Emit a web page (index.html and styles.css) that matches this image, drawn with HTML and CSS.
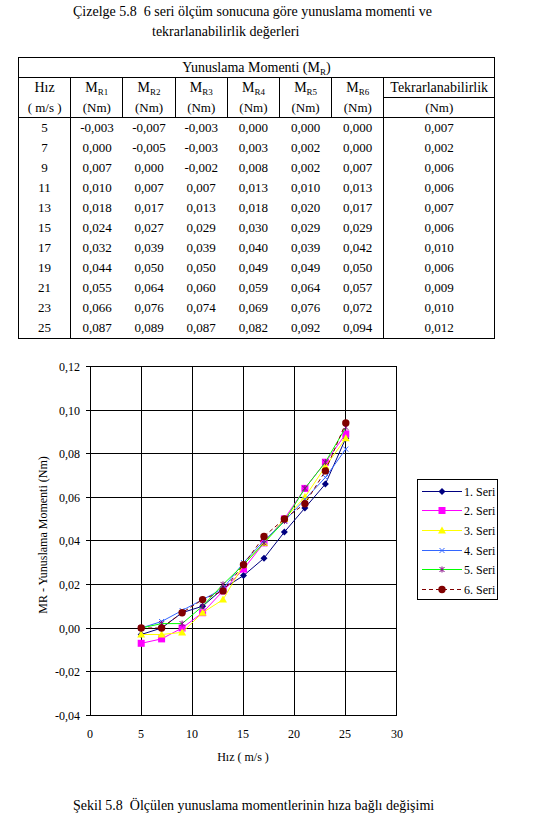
FILE: index.html
```html
<!DOCTYPE html>
<html lang="tr">
<head>
<meta charset="utf-8">
<title>Çizelge 5.8</title>
<link rel="stylesheet" href="styles.css">
</head>
<body>
<div class="title">
  <div class="t1">Çizelge 5.8&nbsp; 6 seri ölçüm sonucuna göre yunuslama momenti ve</div>
  <div class="t2">tekrarlanabilirlik değerleri</div>
</div>

<table class="data">
  <colgroup>
    <col class="c-hiz"><col class="c-m"><col class="c-m"><col class="c-m"><col class="c-m"><col class="c-m"><col class="c-m"><col class="c-t">
  </colgroup>
  <thead>
    <tr class="h1"><th colspan="8">Yunuslama Momenti (M<sub>R</sub>)</th></tr>
    <tr class="h2">
      <th>Hız</th><th>M<sub>R1</sub></th><th>M<sub>R2</sub></th><th>M<sub>R3</sub></th><th>M<sub>R4</sub></th><th>M<sub>R5</sub></th><th>M<sub>R6</sub></th><th class="tk">Tekrarlanabilirlik</th>
    </tr>
    <tr class="h3">
      <th>( m/s )</th><th>(Nm)</th><th>(Nm)</th><th>(Nm)</th><th>(Nm)</th><th>(Nm)</th><th>(Nm)</th><th>(Nm)</th>
    </tr>
  </thead>
  <tbody>
    <tr><td class="sp">5</td><td>-0,003</td><td>-0,007</td><td>-0,003</td><td>0,000</td><td>0,000</td><td class="r6">0,000</td><td>0,007</td></tr>
    <tr><td class="sp">7</td><td>0,000</td><td>-0,005</td><td>-0,003</td><td>0,003</td><td>0,002</td><td class="r6">0,000</td><td>0,002</td></tr>
    <tr><td class="sp">9</td><td>0,007</td><td>0,000</td><td>-0,002</td><td>0,008</td><td>0,002</td><td class="r6">0,007</td><td>0,006</td></tr>
    <tr><td class="sp">11</td><td>0,010</td><td>0,007</td><td>0,007</td><td>0,013</td><td>0,010</td><td class="r6">0,013</td><td>0,006</td></tr>
    <tr><td class="sp">13</td><td>0,018</td><td>0,017</td><td>0,013</td><td>0,018</td><td>0,020</td><td class="r6">0,017</td><td>0,007</td></tr>
    <tr><td class="sp">15</td><td>0,024</td><td>0,027</td><td>0,029</td><td>0,030</td><td>0,029</td><td class="r6">0,029</td><td>0,006</td></tr>
    <tr><td class="sp">17</td><td>0,032</td><td>0,039</td><td>0,039</td><td>0,040</td><td>0,039</td><td class="r6">0,042</td><td>0,010</td></tr>
    <tr><td class="sp">19</td><td>0,044</td><td>0,050</td><td>0,050</td><td>0,049</td><td>0,049</td><td class="r6">0,050</td><td>0,006</td></tr>
    <tr><td class="sp">21</td><td>0,055</td><td>0,064</td><td>0,060</td><td>0,059</td><td>0,064</td><td class="r6">0,057</td><td>0,009</td></tr>
    <tr><td class="sp">23</td><td>0,066</td><td>0,076</td><td>0,074</td><td>0,069</td><td>0,076</td><td class="r6">0,072</td><td>0,010</td></tr>
    <tr><td class="sp">25</td><td>0,087</td><td>0,089</td><td>0,087</td><td>0,082</td><td>0,092</td><td class="r6">0,094</td><td>0,012</td></tr>
  </tbody>
</table>

<svg class="chart" width="540" height="450" viewBox="0 340 540 450" xmlns="http://www.w3.org/2000/svg">
  <defs>
    <marker id="mk1" viewBox="-6 -6 12 12" markerWidth="12" markerHeight="12" refX="0" refY="0" markerUnits="userSpaceOnUse">
      <path d="M0,-3.5 L3.5,0 L0,3.5 L-3.5,0 Z" class="f1"/>
    </marker>
    <marker id="mk2" viewBox="-6 -6 12 12" markerWidth="12" markerHeight="12" refX="0" refY="0" markerUnits="userSpaceOnUse">
      <rect x="-3.5" y="-3.5" width="7" height="7" class="f2"/>
    </marker>
    <marker id="mk3" viewBox="-6 -6 12 12" markerWidth="12" markerHeight="12" refX="0" refY="0" markerUnits="userSpaceOnUse">
      <path d="M0,-4 L4,3 L-4,3 Z" class="f3"/>
    </marker>
    <marker id="mk4" viewBox="-6 -6 12 12" markerWidth="12" markerHeight="12" refX="0" refY="0" markerUnits="userSpaceOnUse">
      <path d="M-2.5,-2.5 L2.5,2.5 M-2.5,2.5 L2.5,-2.5" class="s4m"/>
    </marker>
    <marker id="mk5" viewBox="-6 -6 12 12" markerWidth="12" markerHeight="12" refX="0" refY="0" markerUnits="userSpaceOnUse">
      <path d="M-2.5,-2.5 L2.5,2.5 M-2.5,2.5 L2.5,-2.5 M0,-3 L0,3" class="s5m"/>
    </marker>
    <marker id="mk6" viewBox="-6 -6 12 12" markerWidth="12" markerHeight="12" refX="0" refY="0" markerUnits="userSpaceOnUse">
      <circle cx="0" cy="0" r="3.7" class="f6"/>
    </marker>
  </defs>

  <g class="grid">
    <line x1="86" y1="366.5" x2="397" y2="366.5"/>
    <line x1="86" y1="410.5" x2="397" y2="410.5"/>
    <line x1="86" y1="453.5" x2="397" y2="453.5"/>
    <line x1="86" y1="497.5" x2="397" y2="497.5"/>
    <line x1="86" y1="540.5" x2="397" y2="540.5"/>
    <line x1="86" y1="584.5" x2="397" y2="584.5"/>
    <line x1="86" y1="628.5" x2="397" y2="628.5"/>
    <line x1="86" y1="671.5" x2="397" y2="671.5"/>
    <line x1="86" y1="715.5" x2="397" y2="715.5"/>
    <line x1="90.5" y1="366" x2="90.5" y2="716"/>
    <line x1="141.5" y1="366" x2="141.5" y2="716"/>
    <line x1="192.5" y1="366" x2="192.5" y2="716"/>
    <line x1="243.5" y1="366" x2="243.5" y2="716"/>
    <line x1="294.5" y1="366" x2="294.5" y2="716"/>
    <line x1="345.5" y1="366" x2="345.5" y2="716"/>
    <line x1="396.5" y1="366" x2="396.5" y2="716"/>
  </g>

  <g class="lbl ylbl">
    <text x="80" y="371">0,12</text>
    <text x="80" y="415">0,10</text>
    <text x="80" y="458">0,08</text>
    <text x="80" y="502">0,06</text>
    <text x="80" y="545">0,04</text>
    <text x="80" y="589">0,02</text>
    <text x="80" y="633">0,00</text>
    <text x="80" y="676">-0,02</text>
    <text x="80" y="720">-0,04</text>
  </g>
  <g class="lbl xlbl">
    <text x="90" y="738">0</text>
    <text x="141" y="738">5</text>
    <text x="192" y="738">10</text>
    <text x="243" y="738">15</text>
    <text x="294" y="738">20</text>
    <text x="345" y="738">25</text>
    <text x="397" y="738">30</text>
  </g>
  <text class="lbl xtitle" x="243" y="761">Hız ( m/s )</text>
  <text class="lbl ytitle" transform="translate(47,535) rotate(-90)">MR - Yunuslama Momenti (Nm)</text>

  <polyline class="s s1" points="141.2,634.5 161.6,628 182.1,612.7 202.6,606.2 223,588.7 243.5,575.6 264,558.2 284.4,532 304.9,508 325.4,484 345.8,438.2"/>
  <polyline class="s s2" points="141.2,643.3 161.6,638.9 182.1,628 202.6,612.7 223,590.9 243.5,569.1 264,542.9 284.4,518.9 304.9,488.4 325.4,462.2 345.8,433.9"/>
  <polyline class="s s3" points="141.2,634.5 161.6,634.5 182.1,632.4 202.6,612.7 223,599.6 243.5,564.7 264,542.9 284.4,518.9 304.9,497.1 325.4,466.6 345.8,438.2"/>
  <polyline class="s s4" points="141.2,628 161.6,621.5 182.1,610.5 202.6,599.6 223,588.7 243.5,562.6 264,540.8 284.4,521.1 304.9,499.3 325.4,477.5 345.8,449.1"/>
  <polyline class="s s5" points="141.2,628 161.6,623.6 182.1,623.6 202.6,606.2 223,584.4 243.5,564.7 264,542.9 284.4,521.1 304.9,488.4 325.4,462.2 345.8,427.3"/>
  <polyline class="s s6" points="141.2,628 161.6,628 182.1,612.7 202.6,599.6 223,590.9 243.5,564.7 264,536.4 284.4,518.9 304.9,503.7 325.4,470.9 345.8,422.9"/>

  <rect class="legend" x="417.5" y="479.5" width="80" height="120"/>
  <polyline class="s s1 lg" points="422,491.5 442,491.5 462,491.5"/>
  <polyline class="s s2 lg" points="422,510.5 442,510.5 462,510.5"/>
  <polyline class="s s3 lg" points="422,530.5 442,530.5 462,530.5"/>
  <polyline class="s s4 lg" points="422,550.5 442,550.5 462,550.5"/>
  <polyline class="s s5 lg" points="422,569.5 442,569.5 462,569.5"/>
  <polyline class="s s6 lg" points="422,589.5 442,589.5 462,589.5"/>
  <g class="lbl legtxt">
    <text x="464" y="496">1. Seri</text>
    <text x="464" y="515">2. Seri</text>
    <text x="464" y="535">3. Seri</text>
    <text x="464" y="555">4. Seri</text>
    <text x="464" y="574">5. Seri</text>
    <text x="464" y="594">6. Seri</text>
  </g>
</svg>

<div class="caption">Şekil 5.8&nbsp; Ölçülen yunuslama momentlerinin hıza bağlı değişimi</div>
</body>
</html>
```
FILE: styles.css
```css
html, body {
  margin: 0;
  padding: 0;
  background: #fff;
}
body {
  width: 540px;
  font-family: "Liberation Serif", Tinos, "Times New Roman", serif;
  font-size: 14px;
  color: #000;
}
.title {
  padding: 2px 0 0 73px;
  line-height: 20px;
}
.title .t2 {
  padding-left: 79px;
}
.data {
  margin: 15px 0 0 18px;
  border-collapse: collapse;
  table-layout: fixed;
  width: 477px;
  border: 1px solid #000;
}
.c-hiz { width: 52px; }
.c-m { width: 52px; }
.c-t { width: 110px; }
.data th, .data td {
  padding: 0;
  text-align: center;
  font-weight: normal;
  white-space: nowrap;
}
.data th {
  height: 19px;
  line-height: 19px;
  font-size: 14px;
}
.data .h3 th {
  font-size: 13px;
}
.data td {
  height: 20px;
  line-height: 20px;
  font-size: 13px;
}
.data sub {
  font-size: 9px;
  line-height: 0;
  vertical-align: -3px;
}
.h1 th {
  border-bottom: 1px solid #000;
}
.h2 th, .h3 th {
  border-left: 1px solid #000;
}
.h2 th.tk {
  border-bottom: 1px solid #000;
}
.h3 th {
  border-bottom: 1px solid #000;
}
.data td.sp {
  border-right: 1px solid #000;
}
.data td.r6 {
  border-right: 1px solid #000;
}
.chart {
  display: block;
  margin-top: 1px;
}
.grid line {
  stroke: #000;
  stroke-width: 1;
  shape-rendering: crispEdges;
}
.lbl {
  font-family: "Liberation Serif", Tinos, "Times New Roman", serif;
  font-size: 12px;
  fill: #000;
}
.ylbl text { text-anchor: end; }
.xlbl text { text-anchor: middle; }
.xtitle { text-anchor: middle; }
.ytitle { text-anchor: middle; }
.s {
  fill: none;
  stroke-width: 1;
  marker-start: var(--mk);
  marker-mid: var(--mk);
  marker-end: var(--mk);
}
.s.lg {
  marker-start: none;
  marker-end: none;
}
.s1 { stroke: #000080; --mk: url(#mk1); }
.s2 { stroke: #ff00ff; --mk: url(#mk2); }
.s3 { stroke: #ffff00; --mk: url(#mk3); }
.s4 { stroke: #3366ff; --mk: url(#mk4); }
.s5 { stroke: #00ff00; --mk: url(#mk5); }
.s6 { stroke: #800000; --mk: url(#mk6); stroke-dasharray: 4 3; }
.f1 { fill: #000080; }
.f2 { fill: #ff00ff; }
.f3 { fill: #ffff00; }
.f6 { fill: #800000; }
.s4m { stroke: #3366ff; stroke-width: 1; fill: none; stroke-dasharray: none; }
.s5m { stroke: #800080; stroke-width: 1; fill: none; stroke-dasharray: none; }
.legend {
  fill: #fff;
  stroke: #000;
  stroke-width: 1;
}
.caption {
  margin-top: 6px;
  padding-left: 73px;
  line-height: 20px;
}
```
